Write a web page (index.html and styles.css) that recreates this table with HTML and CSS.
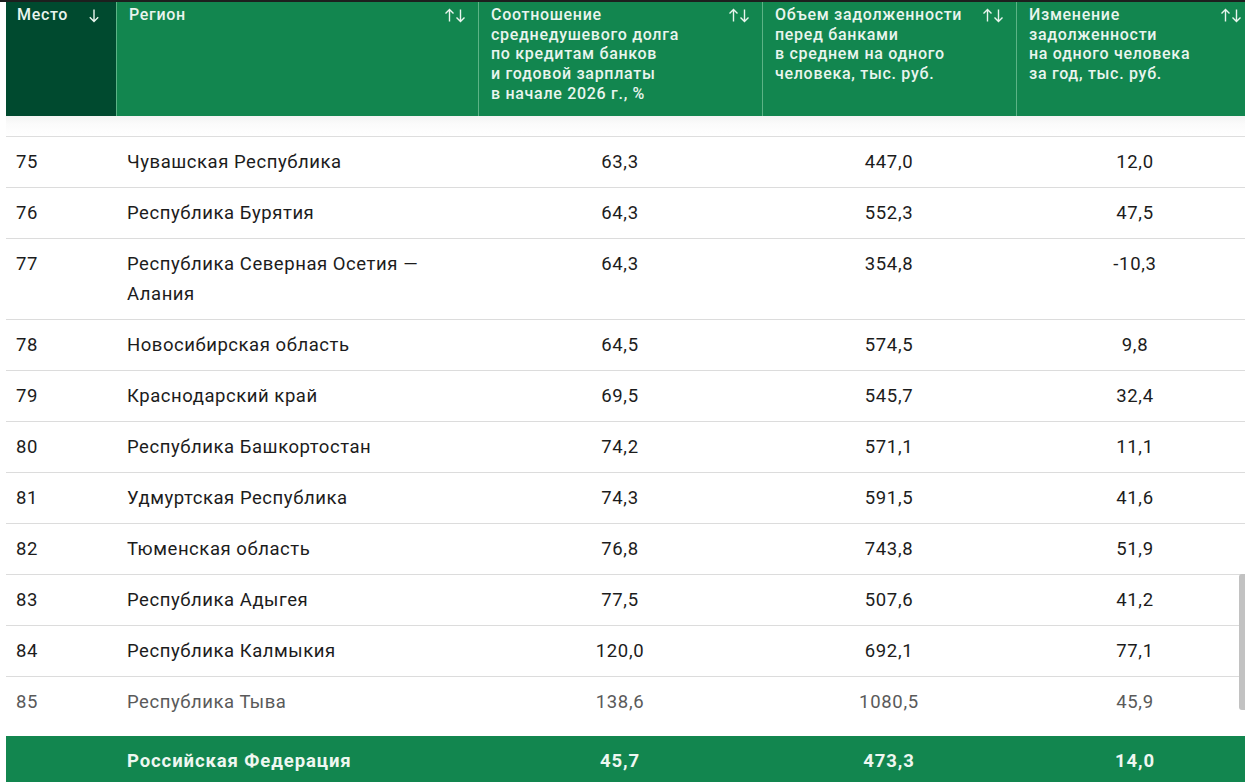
FILE: index.html
```html
<!DOCTYPE html>
<html lang="ru">
<head>
<meta charset="utf-8">
<title>Рейтинг регионов</title>
<link rel="stylesheet" href="styles.css">
</head>
<body>
<div class="topline"></div>
<div class="table">
  <div class="thead">
    <div class="th th-place"><span>Место</span><svg class="sort" width="12" height="15" viewBox="0 0 12 15"><path d="M6 1.5V13.5M1.8 9.3L6 13.5L10.2 9.3" fill="none" stroke="currentColor" stroke-width="1.4"/></svg></div>
    <div class="th"><span>Регион</span><svg class="sort" width="22" height="15" viewBox="0 0 22 15"><path d="M5.5 13.5V1.5M1.5 5.5L5.5 1.5L9.5 5.5M16.5 1.5V13.5M12.5 9.5L16.5 13.5L20.5 9.5" fill="none" stroke="currentColor" stroke-width="1.4"/></svg></div>
    <div class="th"><span>Соотношение<br>среднедушевого долга<br>по кредитам банков<br>и годовой зарплаты<br>в начале 2026 г., %</span><svg class="sort" width="22" height="15" viewBox="0 0 22 15"><path d="M5.5 13.5V1.5M1.5 5.5L5.5 1.5L9.5 5.5M16.5 1.5V13.5M12.5 9.5L16.5 13.5L20.5 9.5" fill="none" stroke="currentColor" stroke-width="1.4"/></svg></div>
    <div class="th"><span>Объем задолженности<br>перед банками<br>в среднем на одного<br>человека, тыс. руб.</span><svg class="sort" width="22" height="15" viewBox="0 0 22 15"><path d="M5.5 13.5V1.5M1.5 5.5L5.5 1.5L9.5 5.5M16.5 1.5V13.5M12.5 9.5L16.5 13.5L20.5 9.5" fill="none" stroke="currentColor" stroke-width="1.4"/></svg></div>
    <div class="th"><span>Изменение<br>задолженности<br>на одного человека<br>за год, тыс. руб.</span><svg class="sort" width="22" height="15" viewBox="0 0 22 15"><path d="M5.5 13.5V1.5M1.5 5.5L5.5 1.5L9.5 5.5M16.5 1.5V13.5M12.5 9.5L16.5 13.5L20.5 9.5" fill="none" stroke="currentColor" stroke-width="1.4"/></svg></div>
  </div>
  <div class="fade"></div>
  <div class="tbody">
    <div class="tr"><div class="td">75</div><div class="td reg">Чувашская Республика</div><div class="td num">63,3</div><div class="td num">447,0</div><div class="td num">12,0</div></div>
    <div class="tr"><div class="td">76</div><div class="td reg">Республика Бурятия</div><div class="td num">64,3</div><div class="td num">552,3</div><div class="td num">47,5</div></div>
    <div class="tr"><div class="td">77</div><div class="td reg">Республика Северная Осетия — Алания</div><div class="td num">64,3</div><div class="td num">354,8</div><div class="td num">-10,3</div></div>
    <div class="tr"><div class="td">78</div><div class="td reg">Новосибирская область</div><div class="td num">64,5</div><div class="td num">574,5</div><div class="td num">9,8</div></div>
    <div class="tr"><div class="td">79</div><div class="td reg">Краснодарский край</div><div class="td num">69,5</div><div class="td num">545,7</div><div class="td num">32,4</div></div>
    <div class="tr"><div class="td">80</div><div class="td reg">Республика Башкортостан</div><div class="td num">74,2</div><div class="td num">571,1</div><div class="td num">11,1</div></div>
    <div class="tr"><div class="td">81</div><div class="td reg">Удмуртская Республика</div><div class="td num">74,3</div><div class="td num">591,5</div><div class="td num">41,6</div></div>
    <div class="tr"><div class="td">82</div><div class="td reg">Тюменская область</div><div class="td num">76,8</div><div class="td num">743,8</div><div class="td num">51,9</div></div>
    <div class="tr"><div class="td">83</div><div class="td reg">Республика Адыгея</div><div class="td num">77,5</div><div class="td num">507,6</div><div class="td num">41,2</div></div>
    <div class="tr"><div class="td">84</div><div class="td reg">Республика Калмыкия</div><div class="td num">120,0</div><div class="td num">692,1</div><div class="td num">77,1</div></div>
    <div class="tr tr-faded"><div class="td">85</div><div class="td reg">Республика Тыва</div><div class="td num">138,6</div><div class="td num">1080,5</div><div class="td num">45,9</div></div>
  </div>
  <div class="tr tr-total"><div class="td"></div><div class="td reg">Российская Федерация</div><div class="td num">45,7</div><div class="td num">473,3</div><div class="td num">14,0</div></div>
</div>
<div class="scrollbar"></div>
</body>
</html>
```
FILE: styles.css
```css
html, body {
  margin: 0;
  padding: 0;
  background: #ffffff;
  overflow: hidden;
  height: 782px;
}
body {
  font-family: Roboto, "Noto Sans", "Liberation Sans", sans-serif;
  color: #1c1c1c;
  position: relative;
}
.topline {
  height: 2px;
  background: #1d1f1e;
}
.table {
  margin-left: 6px;
  width: 1248px;
}
.thead,
.tr {
  display: grid;
  grid-template-columns: 110px 362px 284px 254px 238px;
}
.thead {
  height: 114px;
  background: #12864f;
}
.th {
  display: flex;
  justify-content: space-between;
  align-items: flex-start;
  padding: 3px 12px 0 12px;
  border-left: 1px solid #5cb386;
  color: #e9f5ee;
  font-size: 16px;
  font-weight: 500;
  line-height: 19.7px;
  letter-spacing: 0.7px;
  box-sizing: border-box;
}
.th-place {
  background: #004a2f;
  border-left: none;
  padding-left: 11px;
  padding-right: 16px;
}
.sort {
  margin-top: 3px;
  flex-shrink: 0;
  color: #e9f5ee;
}
.fade {
  height: 20px;
  background: linear-gradient(#f3f4f3, #fbfbfb 40%, #ffffff);
  border-bottom: 1px solid #dedede;
}
.tr {
  border-bottom: 1px solid #dcdcdc;
}
.td {
  padding: 10px 12px 10px 10px;
  font-size: 18.5px;
  line-height: 30px;
  letter-spacing: 0.55px;
}
.td.reg {
  padding-left: 11px;
}
.td.num {
  text-align: center;
  padding-left: 0;
  padding-right: 0;
  letter-spacing: 0.7px;
}
.tr-faded {
  border-bottom: none;
  color: #5a5a5a;
  margin-bottom: 9px;
}
.tr-total {
  background: #12864f;
  border-bottom: none;
  color: #eef7f1;
  font-weight: 700;
}
.tr-total .td {
  font-weight: 700;
  letter-spacing: 0.9px;
}
.scrollbar {
  position: absolute;
  right: 0;
  top: 574px;
  width: 6px;
  height: 136px;
  border-radius: 3px 0 0 3px;
  background: #c2c2c2;
}
```
